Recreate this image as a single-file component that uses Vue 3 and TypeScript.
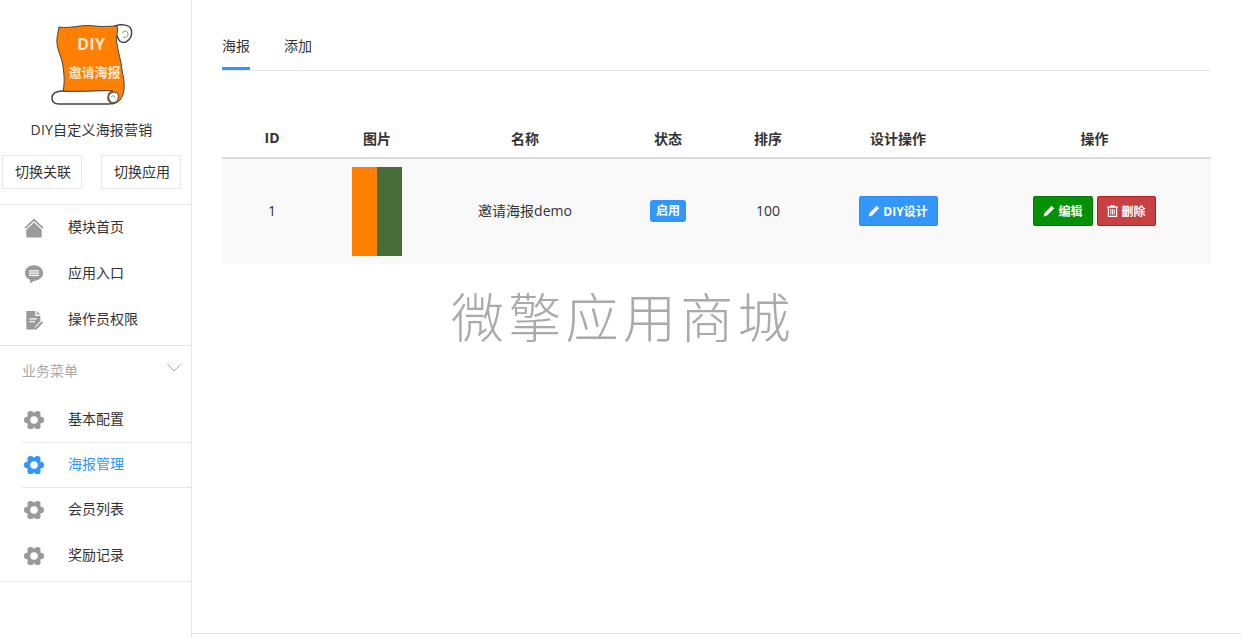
<template>
  <div class="page">
    <!-- sidebar -->
    <aside class="side">
      <div class="side__brand">
        <svg class="logo" width="82" height="82" viewBox="0 0 82 82">
          <path class="logo__paper" d="M12 67C5 67 1 69 1 74c0 4 3 6 7 6h50c6 0 10-4 10-9v-5z" />
          <path class="logo__paper" d="M64 2c4-2 14-2 16 3 2 6-1 11-5 13-3 1-6 0-7-2l-3-6z" />
          <path class="logo__curl" d="M71 9c2-3 6-2 6 1 0 3-3 4-5 3" />
          <path class="logo__orange" d="M8 3c12 2 22-3 36-1 8 1 16 0 22 0 2 6-2 10 0 18 1 8 4 16 5 26 1 6 3 12 2 20-1 6-3 12-11 14-4-1-6-4-5-8 0-3 3-5 5-5-12-1-32 1-50 0 2-9 1-17 0-25C10 30 5 25 6 14z" />
          <path class="logo__paper logo__paper--thin" d="M58 71c2-3 7-4 9-1 1 3 0 6-2 8-2 1-5 1-6-1-1-2-2-4-1-6z" />
          <path class="logo__curl" d="M60 73c2-2 4-1 4 1" />
          <text x="40" y="26" class="logo__diy">DIY</text>
          <text x="43.500" y="53" class="logo__cn">邀请海报</text>
        </svg>
        <div class="side__title">DIY自定义海报营销</div>
        <div class="side__btns">
          <a class="side__btn">切换关联</a>
          <a class="side__btn">切换应用</a>
        </div>
      </div>

      <nav class="menu menu--top">
        <a v-for="m in topMenu" :key="m.label" class="menu__item">
          <svg class="menu__icon" width="20" height="20" viewBox="0 0 22 22">
            <path v-if="m.icon === 'home'" d="M11 .5 .5 10.500l1.300 1.400L11 3.200l9.200 8.700 1.300-1.400zM2.500 13v8.500h17V13L11 5z" />
            <path v-else-if="m.icon === 'chat'" fill-rule="evenodd" d="M11 1.500c5.500 0 10 3.700 10 8.500 0 4.600-4.300 8.300-9.500 8.400L7 21.300l-.6-3.900C3 16 1 13.200 1 10c0-4.800 4.500-8.500 10-8.500zM5.500 6.800v1.400h11V6.800zm0 2.500v1.400h11V9.300zm0 2.500v1.400h11v-1.400z" />
            <path v-else fill-rule="evenodd" d="M2.500 1h10v5.500H18V12l-6 6.500V21.500H2.500zM14 1.200l3.800 3.800H14zM6 9v1.500h8V9zm0 3v1.500h6V12zM19.500 12.500l1.600 1.600-7.600 7.400-2 .4.400-2z" />
          </svg>
          <span>{{ m.label }}</span>
        </a>
      </nav>

      <div class="group">
        <span>业务菜单</span>
        <svg class="group__arrow" width="14" height="8" viewBox="0 0 14 8"><path d="M.5.5 7 7 13.500.5" /></svg>
      </div>

      <nav class="menu menu--biz">
        <a
          v-for="m in bizMenu"
          :key="m.label"
          class="menu__item"
          :class="{ 'menu__item--on': m.active, 'menu__item--line': m.line }"
        >
          <svg class="menu__icon" width="20" height="20" viewBox="0 0 20 20">
            <circle cx="10" cy="10" r="7.500" />
            <circle v-for="(l, i) in gearLobes" :key="i" :cx="l.x" :cy="l.y" r="3.200" />
            <circle class="menu__hole" cx="10" cy="10" r="3.800" />
          </svg>
          <span>{{ m.label }}</span>
        </a>
      </nav>
    </aside>

    <!-- main -->
    <main class="main">
      <div class="tabs">
        <a class="tabs__item tabs__item--on">海报</a>
        <a class="tabs__item">添加</a>
      </div>

      <table class="tbl">
        <colgroup>
          <col v-for="(w, i) in colWidths" :key="i" :style="{ width: w + 'px' }" />
        </colgroup>
        <thead>
          <tr>
            <th>ID</th><th>图片</th><th>名称</th><th>状态</th><th>排序</th><th>设计操作</th><th>操作</th>
          </tr>
        </thead>
        <tbody>
          <tr>
            <td>1</td>
            <td class="tbl__pic"><div class="thumb"><i></i><i></i></div></td>
            <td class="tbl__name">邀请海报demo</td>
            <td><span class="tag">启用</span></td>
            <td>100</td>
            <td>
              <a class="btn btn--blue">
                <svg width="12" height="12" viewBox="0 0 12 12"><path d="M8.700.8 11.200 3.300 4 10.500.6 11.400 1.500 8z" /></svg>
                DIY设计
              </a>
            </td>
            <td class="tbl__ops">
              <a class="btn btn--green">
                <svg width="12" height="12" viewBox="0 0 12 12"><path d="M8.700.8 11.200 3.300 4 10.500.6 11.400 1.500 8z" /></svg>
                编辑
              </a>
              <a class="btn btn--red">
                <svg width="11" height="12" viewBox="0 0 11 12"><path fill-rule="evenodd" d="M3.500 0h4l.6 1.500H11v1.200h-.8V12H.8V2.700H0V1.500h2.900zM2 2.700v8.100h7V2.700zM3.300 4h1v5.500h-1zm1.700 0h1v5.500H5zm1.700 0h1v5.500h-1z" /></svg>
                删除
              </a>
            </td>
          </tr>
        </tbody>
      </table>

      <div class="watermark">微擎应用商城</div>
    </main>
  </div>
</template>

<script setup lang="ts">
interface MenuItem {
  label: string;
  icon?: string;
  active?: boolean;
  line?: boolean;
}

const topMenu: MenuItem[] = [
  { label: '模块首页', icon: 'home' },
  { label: '应用入口', icon: 'chat' },
  { label: '操作员权限', icon: 'doc' },
];

const bizMenu: MenuItem[] = [
  { label: '基本配置', line: true },
  { label: '海报管理', active: true, line: true },
  { label: '会员列表' },
  { label: '奖励记录' },
];

const colWidths = [100, 110, 186, 100, 100, 160, 233];

// six lobes round the gear, with points left and right
const gearLobes = [0, 60, 120, 180, 240, 300].map((deg) => ({
  x: 10 + 6.800 * Math.cos((deg * Math.PI) / 180),
  y: 10 + 6.800 * Math.sin((deg * Math.PI) / 180),
}));
</script>

<style>
html, body { margin: 0; background: #fff; overflow: hidden; }
</style>

<style scoped>
.page {
  display: flex;
  height: 638px;
  font-family: "Open Sans", "Noto Sans CJK SC", sans-serif;
  font-size: 14px;
  color: #333;
}
a { cursor: pointer; }

/* ── Sidebar ── */
.side {
  width: 191px;
  flex-shrink: 0;
  border-right: 1px solid #e7e7e7;
}
.side__brand {
  height: 205px;
  box-sizing: border-box;
  padding-top: 24px;
  border-bottom: 1px solid #e7e7e7;
  text-align: center;
}
.logo { display: block; margin-left: 51px; }
.logo__orange { fill: #ff8000; stroke: #444; stroke-width: 1; }
.logo__paper { fill: #fff; stroke: #444; stroke-width: 1.5; }
.logo__paper--thin { stroke-width: 1; }
.logo__curl { fill: none; stroke: #888; stroke-width: 1; }
.logo__diy { fill: #fde3c8; font-size: 16.5px; font-weight: 700; text-anchor: middle; }
.logo__cn { fill: #fde7cf; font-size: 13px; font-weight: 700; text-anchor: middle; }
.side__title {
  margin-top: 14px;
  padding-right: 8px;
  letter-spacing: .2px;
  line-height: 20px;
}
.side__btns {
  display: flex;
  justify-content: space-between;
  padding: 0 10px 0 2px;
  margin-top: 15px;
}
.side__btn {
  width: 80px;
  height: 34px;
  box-sizing: border-box;
  padding-left: 2px;
  border: 1px solid #e7e7e7;
  line-height: 32px;
  text-align: center;
}
.menu--top {
  height: 141px;
  box-sizing: border-box;
  border-bottom: 1px solid #e7e7e7;
}
.menu__item {
  display: flex;
  align-items: center;
  height: 46px;
  padding-left: 24px;
}
.menu__item span { margin-bottom: 4px; }
.menu__icon {
  fill: #9a9a9a;
  margin-right: 24px;
  flex-shrink: 0;
}
.menu__hole { fill: #fff; }
.menu--biz {
  height: 185px;
  box-sizing: border-box;
  border-bottom: 1px solid #e7e7e7;
}
.menu--biz .menu__item {
  height: 45px;
  margin-left: 22px;
  padding-left: 2px;
}
.menu--biz .menu__item:first-child { height: 46px; }
.menu--biz .menu__item:nth-child(3) { height: 44px; }
.menu--biz .menu__item:last-child { height: 47px; }
.menu__item--line { border-bottom: 1px solid #e7e7e7; box-sizing: border-box; }
.menu__item--on { color: #3296fa; }
.menu__item--on .menu__icon { fill: #3296fa; }
.menu__item--on .menu__hole { fill: #fff; }
.group {
  display: flex;
  justify-content: space-between;
  height: 51px;
  padding: 15px 10px 0 22px;
  box-sizing: border-box;
  color: #a9a9a9;
  line-height: 20px;
}
.group__arrow {
  fill: none;
  stroke: #a9a9a9;
  margin-top: 3px;
}

/* ── Main ── */
.main {
  flex: 1;
  position: relative;
  padding: 0 30px;
  height: 633px;
  border-bottom: 1px solid #e7e7e7;
}
.tabs {
  display: flex;
  gap: 34px;
  height: 71px;
  box-sizing: border-box;
  border-bottom: 1px solid #e7e7e7;
  padding-top: 36px;
}
.tabs__item {
  height: 33px;
  line-height: 20px;
  box-sizing: border-box;
}
.tabs__item--on { border-bottom: 3px solid #3296fa; height: 34px; }

.tbl {
  width: 989px;
  margin-top: 49px;
  border-collapse: collapse;
  table-layout: fixed;
  text-align: center;
}
.tbl th {
  height: 38px;
  padding: 0 0 2px;
  box-sizing: border-box;
  font-weight: 700;
  border-bottom: 2px solid #ddd;
}
.tbl td {
  padding: 7px 0 9px;
  height: 89px;
  background: #f9f9f9;
}
.tbl td.tbl__pic { padding: 8px 0; }
.tbl td.tbl__name { padding: 6px 0 10px; }
.tbl__ops { font-size: 0; }
.thumb {
  display: flex;
  width: 50px;
  height: 89px;
  margin: 0 auto;
}
.thumb i { flex: 1; background: #ff8000; }
.thumb i + i { background: #486d38; }
.tag {
  display: inline-block;
  padding: 0 6px;
  height: 22px;
  line-height: 22px;
  border-radius: 3px;
  background: #3296fa;
  color: #fff;
  font-size: 12px;
  font-weight: 700;
  vertical-align: middle;
}
.btn {
  display: inline-flex;
  align-items: center;
  justify-content: center;
  gap: 3px;
  height: 30px;
  box-sizing: border-box;
  border: 1px solid;
  border-radius: 2px;
  color: #fff;
  font-size: 12px;
  font-weight: 700;
  vertical-align: middle;
}
.btn svg { fill: #fff; }
.btn--blue { width: 79px; background: #3296fa; border-color: #2a8cf0; }
.btn--green { width: 60px; background: #069006; border-color: #037a03; }
.btn--red { width: 59px; background: #c94043; border-color: #b51c1c; margin-left: 4px; }

.watermark {
  position: absolute;
  left: 259px;
  top: 280px;
  font-size: 53px;
  font-weight: 300;
  letter-spacing: 4.300px;
  line-height: 76px;
  color: #aaa;
  white-space: nowrap;
}
</style>
